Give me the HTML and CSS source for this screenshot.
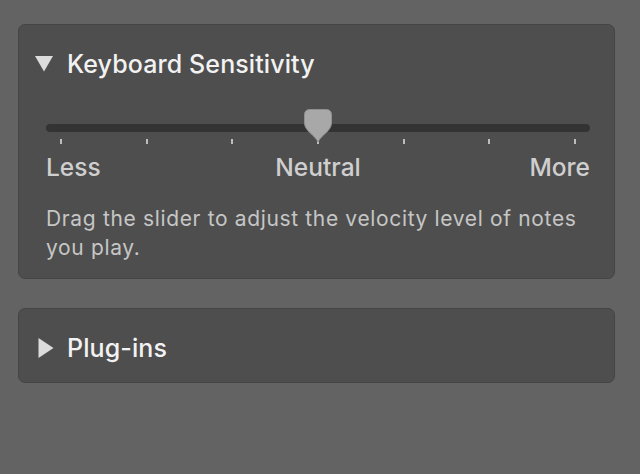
FILE: index.html
```html
<!DOCTYPE html>
<html>
<head>
<meta charset="utf-8">
<link rel="stylesheet" href="styles.css">
</head>
<body>
<div class="panel">
  <section class="card">
    <div class="card-head">
      <span class="disclosure">
        <svg width="18" height="16" viewBox="0 0 18 16"><path d="M0 0 H18 L9 15.5 Z" fill="#dcdcdc"/></svg>
      </span>
      <span class="title">Keyboard Sensitivity</span>
    </div>
    <div class="slider">
      <div class="track">
        <svg class="thumb" width="28" height="34" viewBox="0 0 28 34"><path d="M6 0.5 H22 Q27.5 0.5 27.5 6 V14 C27.5 22 17 26 14 33 C11 26 0.5 22 0.5 14 V6 Q0.5 0.5 6 0.5 Z" fill="#a8a8a8" stroke="#909090" stroke-width="1"/></svg>
      </div>
      <div class="ticks">
        <span class="tick"></span><span class="tick"></span><span class="tick"></span><span class="tick"></span><span class="tick"></span><span class="tick"></span><span class="tick"></span>
      </div>
      <div class="labels">
        <span class="lbl-left">Less</span>
        <span class="lbl-mid">Neutral</span>
        <span class="lbl-right">More</span>
      </div>
    </div>
    <p class="desc">Drag the slider to adjust the velocity level of notes you play.</p>
  </section>
  <section class="card card-closed">
    <div class="card-head">
      <span class="disclosure">
        <svg width="16" height="20" viewBox="0 0 16 20"><path d="M0.5 0 L15.5 10 L0.5 20 Z" fill="#dcdcdc"/></svg>
      </span>
      <span class="title">Plug-ins</span>
    </div>
  </section>
</div>
</body>
</html>
```
FILE: styles.css
```css
html, body {
  margin: 0;
  padding: 0;
  background: #636363;
  font-family: Inter, "Noto Sans", "Liberation Sans", sans-serif;
}
.panel {
  padding: 24px 25px 0 18px;
  display: flex;
  flex-direction: column;
  gap: 29px;
}
.card {
  background: #4e4e4e;
  border: 1px solid #454545;
  border-radius: 7px;
  padding: 24px 0 16px 0;
}
.card-closed {
  padding-bottom: 19px;
}
.card-head {
  display: flex;
  align-items: center;
  height: 30px;
  padding-left: 16px;
}
.disclosure {
  width: 32px;
  display: flex;
  align-items: center;
  justify-content: flex-start;
}
.card-closed .disclosure {
  padding-left: 3px;
  width: 29px;
}
.title {
  font-size: 25px;
  font-weight: 500;
  color: #f2f2f2;
  line-height: 30px;
  letter-spacing: 0.1px;
}
.slider {
  margin: 30px 24px 0 27px;
  padding-top: 15px;
}
.track {
  position: relative;
  height: 8px;
  border-radius: 4px;
  background: #333333;
}
.thumb {
  position: absolute;
  left: 50%;
  top: -15px;
  transform: translateX(-50%);
}
.ticks {
  display: flex;
  justify-content: space-between;
  margin: 7px 14px 0 14px;
  height: 5px;
}
.tick {
  width: 2px;
  background: #bdbdbd;
}
.labels {
  display: grid;
  grid-template-columns: 1fr auto 1fr;
  margin-top: 8px;
  font-size: 24.5px;
  font-weight: 500;
  line-height: 30px;
  color: #cfcfcf;
}
.lbl-left { justify-self: start; }
.lbl-right { justify-self: end; }
.desc {
  margin: 22px 30px 0 27px;
  font-size: 21px;
  line-height: 29px;
  letter-spacing: 0.65px;
  color: #c6c6c6;
}
```
